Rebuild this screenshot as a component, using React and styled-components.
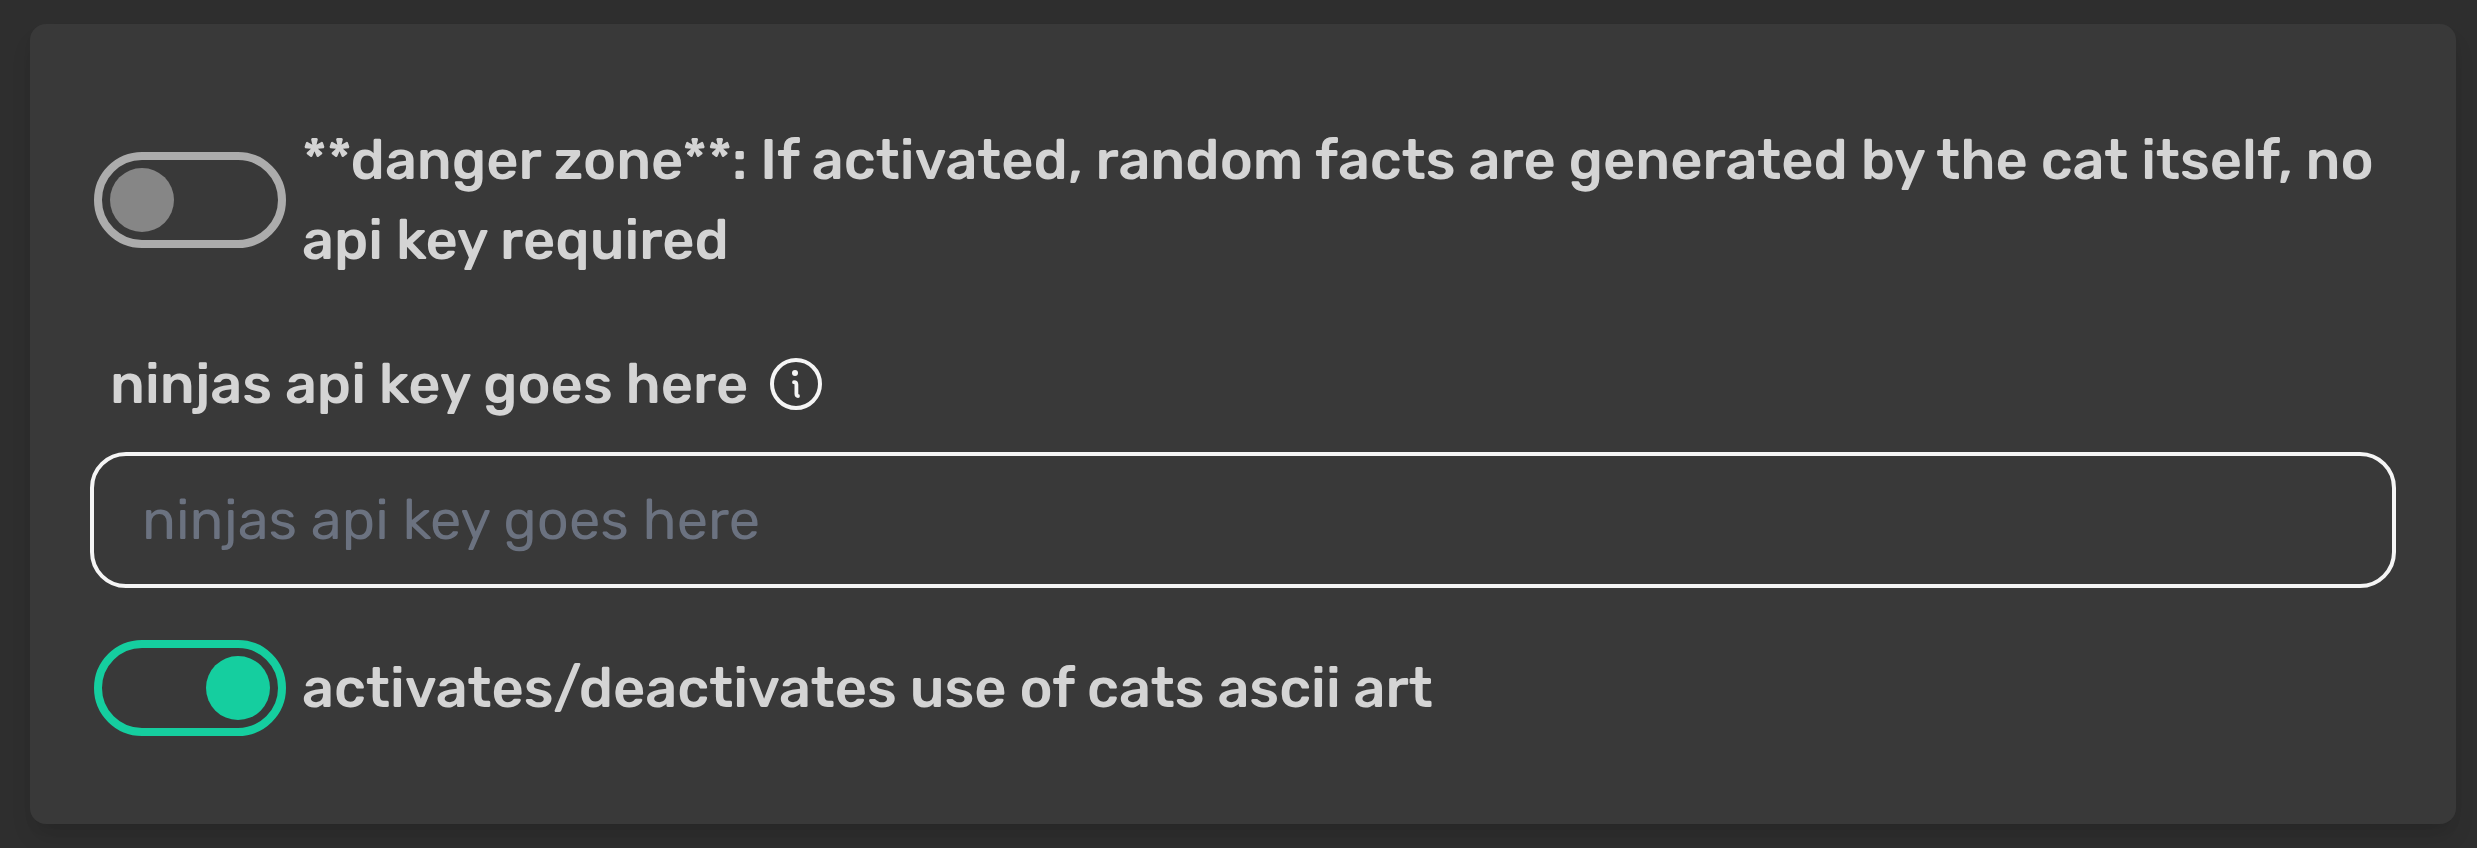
import React, { useState } from 'react';
import styled, { createGlobalStyle } from 'styled-components';

const GlobalStyle = createGlobalStyle`
  *, *::before, *::after { box-sizing: border-box; }
  body {
    margin: 0;
    background: #2e2e2e;
    color: #d4d4d4;
    font-family: Rubik, Roboto, sans-serif;
    font-size: 56px;
    line-height: 80px;
  }
`;

const Page = styled.main`
  height: 848px;
  padding: 24px 21px 24px 30px;
  overflow: hidden;
`;

const Card = styled.section`
  display: flex;
  flex-direction: column;
  height: 800px;
  padding: 96px 60px 88px;
  border-radius: 16px;
  background: #393939;
  box-shadow: 0 16px 24px -4px rgba(0, 0, 0, 0.1), 0 8px 16px -8px rgba(0, 0, 0, 0.1);
`;

const ToggleRow = styled.label`
  display: flex;
  align-items: center;
  gap: 16px;
  padding-left: 4px;
`;

const Switch = styled.input`
  appearance: none;
  flex: none;
  display: flex;
  justify-content: ${({ checked }) => (checked ? 'flex-end' : 'flex-start')};
  width: 192px;
  height: 96px;
  margin: 0;
  padding: 8px;
  border: 8px solid ${({ checked }) => (checked ? '#15ce9f' : '#acacac')};
  border-radius: 48px;

  &::before {
    content: '';
    width: 64px;
    height: 64px;
    border-radius: 50%;
    background: ${({ checked }) => (checked ? '#15ce9f' : '#868686')};
  }
`;

const Text = styled.span`
  font-weight: 500;
`;

const Field = styled.div`
  display: flex;
  flex-direction: column;
  gap: 28px;
  margin: 64px 0 52px;
`;

const FieldHeader = styled.div`
  display: flex;
  align-items: center;
  gap: 22px;
  padding-left: 20px;
`;

const KeyInput = styled.input`
  width: 100%;
  height: 136px;
  padding: 0 48px;
  border: 4px solid #f5f5f5;
  border-radius: 36px;
  outline: none;
  background: transparent;
  color: #d4d4d4;
  font: inherit;

  &::placeholder {
    color: #6b7280;
    opacity: 1;
  }
`;

const InfoIcon = styled.svg`
  flex: none;
  width: 52px;
  height: 52px;
`;

export default function App() {
  const [danger, setDanger] = useState(false);
  const [art, setArt] = useState(true);
  return (
    <>
      <GlobalStyle />
      <Page>
        <Card>
          <ToggleRow>
            <Switch type="checkbox" checked={danger} onChange={() => setDanger(!danger)} />
            <Text>
              **danger zone**: If activated, random facts are generated by the cat itself, no api key required
            </Text>
          </ToggleRow>
          <Field>
            <FieldHeader>
              <Text>ninjas api key goes here</Text>
              <InfoIcon viewBox="0 0 52 52" fill="none" stroke="#f5f5f5" strokeWidth="4" aria-hidden="true">
                <circle cx="26" cy="26" r="24" />
                <circle cx="25" cy="15" r="3" fill="#f5f5f5" stroke="none" />
                <path d="M24 24.2q2.4 0 2.4 2.4v9.2q0 2.2 1.6 2.2" strokeWidth="3.8" strokeLinecap="round" strokeLinejoin="round" />
              </InfoIcon>
            </FieldHeader>
            <KeyInput placeholder="ninjas api key goes here" />
          </Field>
          <ToggleRow>
            <Switch type="checkbox" checked={art} onChange={() => setArt(!art)} />
            <Text>activates/deactivates use of cats ascii art</Text>
          </ToggleRow>
        </Card>
      </Page>
    </>
  );
}
